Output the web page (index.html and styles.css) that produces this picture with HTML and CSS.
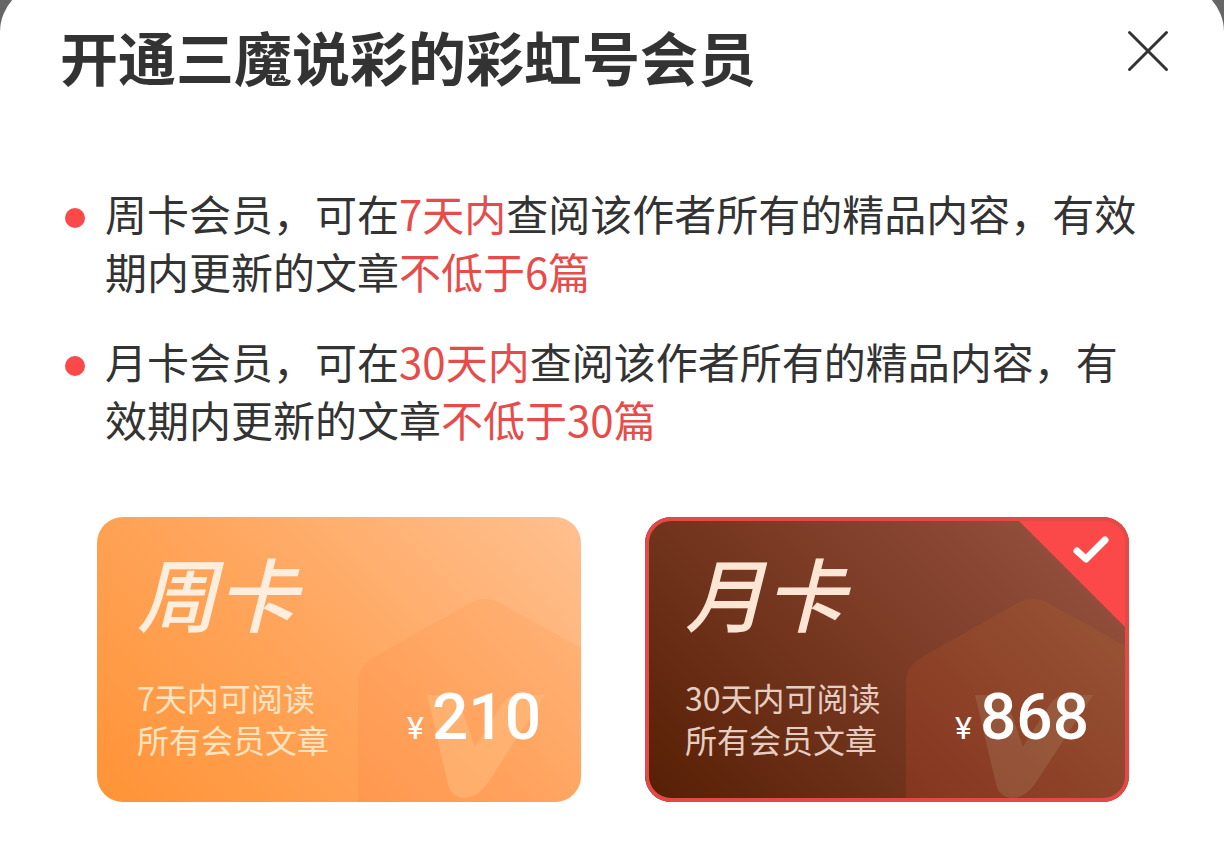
FILE: index.html
```html
<!DOCTYPE html>
<html lang="zh-CN">
<head>
  <meta charset="UTF-8">
  <meta name="viewport" content="width=device-width, initial-scale=1.0">
  <title>开通会员</title>
  <link rel="stylesheet" href="styles.css">
</head>
<body>
  <main class="sheet">
    <header class="sheet-header">
      <h1>开通三魔说彩的彩虹号会员</h1>
      <button class="close-btn" type="button" aria-label="关闭">
        <svg viewBox="0 0 42 42" fill="none" stroke="#333" stroke-width="3" stroke-linecap="round">
          <path d="M2.5 2.5 39.5 39.5M39.5 2.5 2.5 39.5"/>
        </svg>
      </button>
    </header>

    <ul class="rules">
      <li><p>周卡会员，可在<em>7天内</em>查阅该作者所有的精品内容，有效期内更新的文章<em>不低于6篇</em></p></li>
      <li><p>月卡会员，可在<em>30天内</em>查阅该作者所有的精品内容，有效期内更新的文章<em>不低于30篇</em></p></li>
    </ul>

    <form class="plans">
      <label class="plan plan-week">
        <input type="radio" name="plan" value="week">
        <svg class="plan-art" viewBox="0 0 484 285" preserveAspectRatio="xMaxYMax meet" aria-hidden="true">
          <defs>
            <linearGradient id="weekHex" x1="0" y1="1" x2="1" y2="0">
              <stop offset="0" stop-color="#ff8f4c" stop-opacity="0.5"/>
              <stop offset="1" stop-color="#ffa560" stop-opacity="0.3"/>
            </linearGradient>
          </defs>
          <path fill="url(#weekHex)" d="M261 285V166Q261 149 277 140L371 87Q388 77 405 87L484 131V285Z"/>
          <path fill="#ffc58a" fill-opacity="0.4" d="M330 178H360L378 230L405 187Q411 178 422 178H448L390 267Q380 281 367 281Q354 280 351 267Z"/>
        </svg>
        <span class="plan-name">周卡</span>
        <span class="plan-info">
          <span class="plan-desc">7天内可阅读<br>所有会员文章</span>
          <span class="plan-price"><small>¥</small>210</span>
        </span>
      </label>

      <label class="plan plan-month">
        <input type="radio" name="plan" value="month" checked>
        <svg class="plan-art" viewBox="0 0 484 285" preserveAspectRatio="xMaxYMax meet" aria-hidden="true">
          <defs>
            <linearGradient id="monthHex" x1="0" y1="1" x2="1" y2="0">
              <stop offset="0" stop-color="#943822" stop-opacity="0.6"/>
              <stop offset="1" stop-color="#a05a30" stop-opacity="0.5"/>
            </linearGradient>
          </defs>
          <path fill="url(#monthHex)" d="M261 285V166Q261 149 277 140L371 87Q388 77 405 87L484 131V285Z"/>
          <path fill="#b09070" fill-opacity="0.25" d="M330 178H360L378 230L405 187Q411 178 422 178H448L390 267Q380 281 367 281Q354 280 351 267Z"/>
        </svg>
        <span class="plan-name">月卡</span>
        <span class="plan-info">
          <span class="plan-desc">30天内可阅读<br>所有会员文章</span>
          <span class="plan-price"><small>¥</small>868</span>
        </span>
        <svg class="plan-check" viewBox="0 0 114 114" aria-hidden="true">
          <path fill="#fb4949" d="M0 0H114V114Z"/>
          <path fill="none" stroke="#fff" stroke-width="7" stroke-linecap="round" stroke-linejoin="round" d="M62 34 71 42 90 23"/>
        </svg>
      </label>
    </form>
  </main>
</body>
</html>
```

FILE: styles.css
```css
* {
  margin: 0;
  padding: 0;
  box-sizing: border-box;
}

body {
  font-family: "Noto Sans CJK SC", sans-serif;
  background-color: #666;
  color: #333;
  overflow-x: hidden;
}

.sheet {
  margin-top: -16px;
  min-height: calc(100vh + 16px);
  padding: 40px 0 46px;
  border-radius: 48px 48px 0 0;
  background-color: #fff;
}

.sheet-header {
  display: flex;
  justify-content: space-between;
  align-items: flex-start;
  padding: 0 55px 0 60px;
}

.sheet-header h1 {
  font-size: 58px;
  line-height: 64px;
  font-weight: 700;
}

.close-btn {
  width: 42px;
  height: 42px;
  margin-top: 6px;
  border: none;
  background: none;
  cursor: pointer;
}

.close-btn svg {
  display: block;
  width: 100%;
}

.rules {
  display: flex;
  flex-direction: column;
  gap: 32px;
  margin-top: 96px;
  padding: 0 79px 0 65px;
  list-style: none;
  font-size: 42px;
  line-height: 58px;
}

.rules li {
  display: flex;
  gap: 20px;
}

.rules li::before {
  content: "";
  flex: none;
  width: 20px;
  height: 20px;
  margin-top: 24px;
  border-radius: 50%;
  background-color: #fb4949;
}

.rules em {
  font-style: normal;
  color: #e84c4a;
}

.plans {
  display: grid;
  grid-template-columns: 1fr 1fr;
  gap: 64px;
  margin-top: 69px;
  padding: 0 95px 0 97px;
}

.plan {
  position: relative;
  display: flex;
  flex-direction: column;
  justify-content: space-between;
  min-height: 285px;
  padding: 20px 40px 36px;
  border-radius: 26px;
  overflow: hidden;
  cursor: pointer;
}

.plan input {
  position: absolute;
  opacity: 0;
}

.plan-week {
  background: linear-gradient(45deg, #ff9336, #ffa65e 50%, #ffc090);
  color: #ffeedd;
}

.plan-month {
  background: linear-gradient(45deg, #561f04, #7a3a24 50%, #9a5644);
  color: #ffe6d4;
}

/* Outline of the chosen plan */
.plan:has(input:checked)::after {
  content: "";
  position: absolute;
  inset: 0;
  border: 4px solid #e34a46;
  border-radius: 26px;
}

.plan-art {
  position: absolute;
  inset: 0;
  width: 100%;
  height: 100%;
}

.plan-check {
  position: absolute;
  top: 0;
  right: 0;
  width: 114px;
}

.plan-name {
  position: relative;
  font-size: 80px;
  line-height: 108px;
  font-weight: 500;
  font-style: italic;
}

.plan-info {
  position: relative;
  display: flex;
  justify-content: space-between;
  align-items: flex-end;
}

.plan-desc {
  padding-bottom: 6px;
  font-size: 32px;
  line-height: 42px;
  white-space: nowrap;
}

.plan-week .plan-desc {
  color: #ffe4c2;
}

.plan-month .plan-desc {
  color: #e6cdc2;
}

.plan-price {
  font-family: Roboto, sans-serif;
  font-size: 64px;
  line-height: 76px;
  font-weight: 500;
  color: #fff;
  white-space: nowrap;
}

.plan-price small {
  margin-right: 8px;
  font-size: 32px;
  font-weight: 400;
}
```
